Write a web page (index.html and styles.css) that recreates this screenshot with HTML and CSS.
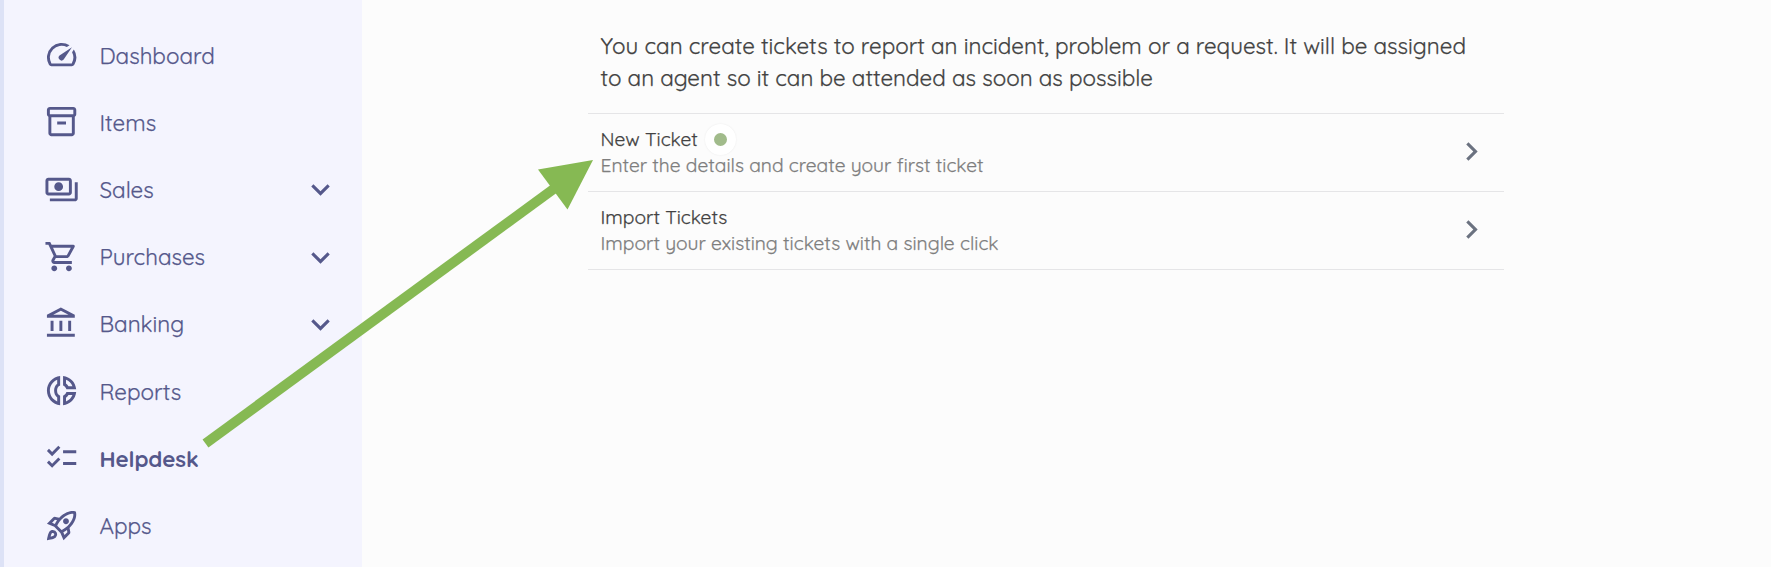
FILE: index.html
```html
<!DOCTYPE html>
<html lang="en">
<head>
    <meta charset="utf-8">
    <title>Helpdesk</title>
    <link rel="stylesheet" href="styles.css">
</head>
<body>
    <div class="app">
        <nav class="sidebar">
            <a class="nav-item">
                <svg class="nav-icon" viewBox="0 0 24 24"><path d="M20.38 8.57l-1.23 1.85a8 8 0 0 1-.22 7.58H5.07A8 8 0 0 1 15.58 6.85l1.85-1.23A10 10 0 0 0 3.35 19a2 2 0 0 0 1.72 1h13.85a2 2 0 0 0 1.74-1 10 10 0 0 0-.27-10.44zm-9.79 6.84a2 2 0 0 0 2.83 0l5.66-8.49-8.49 5.66a2 2 0 0 0 0 2.83z"/></svg>
                <span class="nav-label">Dashboard</span>
            </a>
            <a class="nav-item">
                <svg class="nav-icon" viewBox="0 0 24 24"><path d="M20 2H4c-1 0-2 .9-2 2v3.01c0 .72.43 1.34 1 1.69V20c0 1.1 1.1 2 2 2h14c.9 0 2-.9 2-2V8.7c.57-.35 1-.97 1-1.69V4c0-1.1-1-2-2-2zm-1 18H5V9h14v11zm1-13H4V4h16v3zM9 12h6v2H9z"/></svg>
                <span class="nav-label">Items</span>
            </a>
            <a class="nav-item">
                <svg class="nav-icon" viewBox="0 0 24 24"><path d="M19 14V6c0-1.1-.9-2-2-2H3c-1.1 0-2 .9-2 2v8c0 1.1.9 2 2 2h14c1.1 0 2-.9 2-2zm-2 0H3V6h14v8zm-7-7c-1.66 0-3 1.34-3 3s1.34 3 3 3 3-1.34 3-3-1.34-3-3-3zm13 0v11c0 1.1-.9 2-2 2H4v-2h17V7h2z"/></svg>
                <span class="nav-label">Sales</span>
                <svg class="chevron" viewBox="0 0 24 24"><path d="M7.41 8.59L12 13.17l4.59-4.58L18 10l-6 6-6-6 1.41-1.41z"/></svg>
            </a>
            <a class="nav-item">
                <svg class="nav-icon" viewBox="0 0 24 24"><path d="M15.55 13c.75 0 1.41-.41 1.75-1.03l3.58-6.49A.996.996 0 0 0 20.01 4H5.21l-.94-2H1v2h2l3.6 7.59-1.35 2.44C4.52 15.37 5.48 17 7 17h12v-2H7l1.1-2h7.45zM6.16 6h12.15l-2.76 5H8.53L6.16 6zM7 18c-1.1 0-1.99.9-1.99 2S5.9 22 7 22s2-.9 2-2-.9-2-2-2zm10 0c-1.1 0-1.99.9-1.99 2s.89 2 1.99 2 2-.9 2-2-.9-2-2-2z"/></svg>
                <span class="nav-label">Purchases</span>
                <svg class="chevron" viewBox="0 0 24 24"><path d="M7.41 8.59L12 13.17l4.59-4.58L18 10l-6 6-6-6 1.41-1.41z"/></svg>
            </a>
            <a class="nav-item">
                <svg class="nav-icon" viewBox="0 0 24 24"><path d="M6.5 10h-2v7h2v-7zm6 0h-2v7h2v-7zm8.5 9H2v2h19v-2zm-2.5-9h-2v7h2v-7zm-7-6.74L16.71 6H6.29l5.21-2.74m0-2.26L2 6v2h19V6l-9.5-5z"/></svg>
                <span class="nav-label">Banking</span>
                <svg class="chevron" viewBox="0 0 24 24"><path d="M7.41 8.59L12 13.17l4.59-4.58L18 10l-6 6-6-6 1.41-1.41z"/></svg>
            </a>
            <a class="nav-item">
                <svg class="nav-icon" viewBox="0 0 24 24"><path d="M11 2C5.93 2.5 2 6.8 2 12s3.93 9.5 9 10V15.5C9.5 15 8.9 13.6 8.9 12S9.5 9 11 8.5V2zM9 7.3C7.6 8.4 6.9 10.1 6.9 12s.7 3.6 2.1 4.7v2.7C6.1 18.2 4 15.4 4 12s2.1-6.2 5-7.4v2.7zM13 2v6.5c1 .4 1.9 1.3 2.3 2.5h6.65C21.5 6.2 17.8 2.5 13 2zm2 2.6c2 .8 3.6 2.4 4.4 4.4h-2.7c-.4-.7-1-1.3-1.7-1.8V4.6zM13 15.5V22c4.8-.5 8.5-4.2 8.95-9H15.3c-.4 1.2-1.3 2.1-2.3 2.5zm3.7-.5h2.7c-.8 2-2.4 3.6-4.4 4.4v-2.6c.7-.5 1.3-1.1 1.7-1.8z" fill-rule="evenodd"/></svg>
                <span class="nav-label">Reports</span>
            </a>
            <a class="nav-item active">
                <svg class="nav-icon" viewBox="0 0 24 24"><path d="M22 7h-9v2h9V7zm0 8h-9v2h9v-2zM5.54 11L2 7.46l1.41-1.41 2.12 2.12 4.24-4.24 1.41 1.41L5.54 11zm0 8L2 15.46l1.41-1.41 2.12 2.12 4.24-4.24 1.41 1.41L5.54 19z"/></svg>
                <span class="nav-label">Helpdesk</span>
            </a>
            <a class="nav-item">
                <svg class="nav-icon" viewBox="0 0 24 24"><path d="M6 15c-.83 0-1.58.34-2.12.88C2.7 17.06 2 22 2 22s4.94-.7 6.12-1.88A2.996 2.996 0 0 0 6 15zm.71 3.71c-.28.28-2.17.76-2.17.76s.47-1.88.76-2.17c.17-.19.42-.3.7-.3a1.003 1.003 0 0 1 .71 1.71zm10.71-5.06c6.36-6.36 4.24-11.31 4.24-11.31S16.71.22 10.35 6.58l-2.49-.5a2.03 2.03 0 0 0-1.81.55L2 10.69l5 2.14L11.17 17l2.14 5 4.05-4.05c.47-.47.68-1.15.55-1.81l-.49-2.49zM7.41 10.83l-1.91-.82 1.97-1.97 1.44.29c-.57.83-1.08 1.7-1.5 2.5zm6.58 7.67l-.82-1.91c.8-.42 1.67-.93 2.49-1.5l.29 1.44-1.96 1.97zM16 12.24c-1.32 1.32-3.38 2.4-4.04 2.73l-2.93-2.93c.32-.65 1.4-2.71 2.73-4.04 4.68-4.68 8.23-3.99 8.23-3.99s.69 3.55-3.99 8.23zM15 11c1.1 0 2-.9 2-2s-.9-2-2-2-2 .9-2 2 .9 2 2 2z"/></svg>
                <span class="nav-label">Apps</span>
            </a>
        </nav>

        <main class="content">
            <div class="panel">
                <p class="intro">You can create tickets to report an incident, problem or a request. It will be assigned to an agent so it can be attended as soon as possible</p>
                <a class="action">
                    <div class="action-text">
                        <div class="action-title">New Ticket<span class="pulse"></span></div>
                        <div class="action-desc">Enter the details and create your first ticket</div>
                    </div>
                    <svg class="arrow-right" viewBox="0 0 24 24"><path d="M10 6L8.59 7.41 13.17 12l-4.58 4.59L10 18l6-6z"/></svg>
                </a>
                <a class="action">
                    <div class="action-text">
                        <div class="action-title">Import Tickets</div>
                        <div class="action-desc">Import your existing tickets with a single click</div>
                    </div>
                    <svg class="arrow-right" viewBox="0 0 24 24"><path d="M10 6L8.59 7.41 13.17 12l-4.58 4.59L10 18l6-6z"/></svg>
                </a>
            </div>
        </main>

        <!-- pointer from Helpdesk to New Ticket -->
        <svg class="pointer" viewBox="0 0 1771 567">
            <path class="pointer-line" d="M205.5 443.5L557 186.5"/>
            <path class="pointer-head" d="M593 160L538 169.5L567.5 209.5z"/>
        </svg>
    </div>
</body>
</html>
```

FILE: styles.css
```css
* {
    box-sizing: border-box;
}
body {
    margin: 0;
    background: #fcfcfc;
    font-family: Quicksand, Lato, sans-serif;
    -webkit-text-stroke: 0.25px currentColor;
}
.app {
    position: relative;
    display: flex;
    height: 567px;
    overflow: hidden;
}
.sidebar {
    width: 362px;
    flex: none;
    padding: 22px 23px 0 39.5px;
    border-left: 4px solid #dde2f6;
    background: #f4f4fe;
    color: #55588b;
}
.nav-item {
    display: flex;
    align-items: center;
    height: 67.2px;
    font-size: 22.4px;
}
.nav-icon {
    width: 35.2px;
    height: 35.2px;
    margin-right: 20.8px;
    margin-bottom: 1.5px;
    fill: currentColor;
}
.nav-label {
    flex: 1;
    white-space: nowrap;
}
.active {
    font-weight: 700;
    letter-spacing: -0.15px;
    -webkit-text-stroke: 0;
}
.chevron {
    width: 37px;
    height: 37px;
    fill: currentColor;
}
.content {
    flex: 1;
    padding-left: 226px;
}
.panel {
    width: 916px;
}
.intro {
    margin: 0;
    padding: 30px 13px 19px 12.5px;
    color: #424242;
    font-size: 22.4px;
    line-height: 32px;
}
.action {
    display: flex;
    align-items: center;
    justify-content: space-between;
    height: 78px;
    padding: 0 14px 0 12.5px;
    border-top: 1px solid #e5e5e7;
}
.action:last-child {
    height: 79px;
    border-bottom: 1px solid #e5e5e7;
}
.action-text {
    padding-bottom: 2px;
}
.action-title {
    display: flex;
    align-items: center;
    height: 26px;
    color: #424242;
    font-size: 19.2px;
}
.action-desc {
    height: 25px;
    color: #7e7e7e;
    font-size: 19.2px;
    line-height: 26px;
}
.pulse {
    width: 31px;
    height: 31px;
    margin-left: 7px;
    border: 9px solid #ffffff;
    border-radius: 50%;
    background: #a1bb8b;
    box-shadow: 0 0 2px rgba(0, 0, 0, 0.08);
}
.arrow-right {
    width: 37px;
    height: 37px;
    margin-bottom: 2px;
    fill: #6b7280;
}
.pointer {
    position: absolute;
    top: 0;
    left: 0;
    width: 1771px;
    height: 567px;
}
.pointer-line {
    stroke: #86b953;
    stroke-width: 10;
}
.pointer-head {
    fill: #86b953;
}
```
